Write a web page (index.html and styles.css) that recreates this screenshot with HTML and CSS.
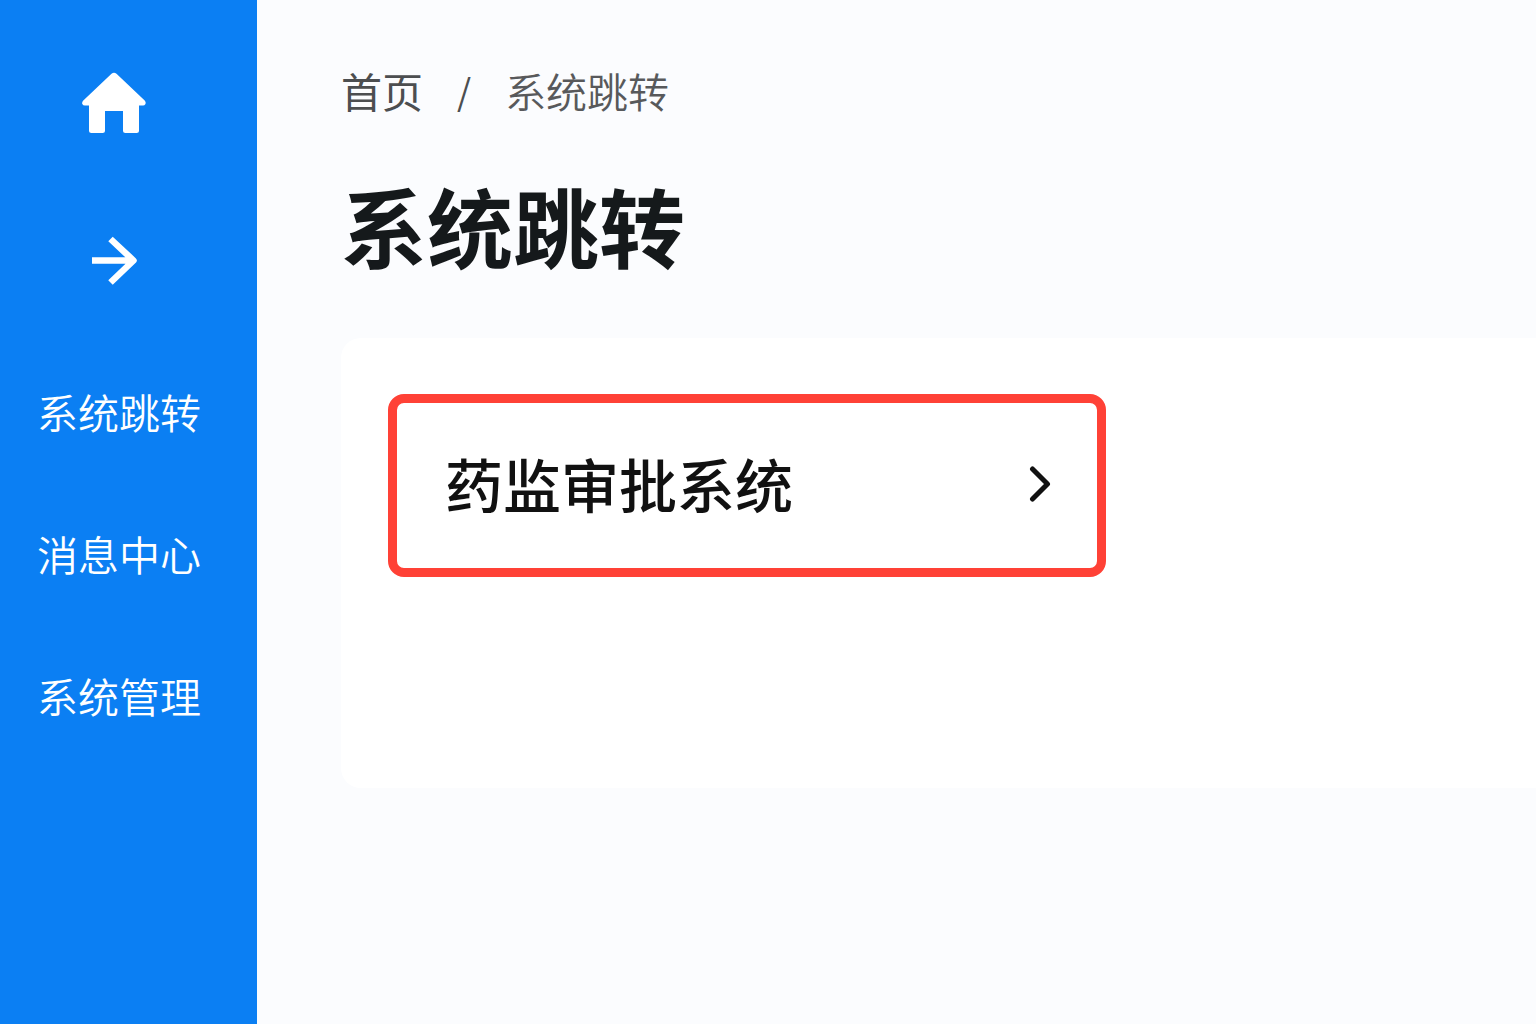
FILE: index.html
```
<!DOCTYPE html>
<html lang="zh-CN">
<head>
  <meta charset="UTF-8" />
  <meta name="viewport" content="width=device-width, initial-scale=1.0" />
  <title>系统跳转</title>
  <link rel="stylesheet" href="styles.css">
</head>
<body>
  <div class="layout">
    <nav class="sidebar">
      <a href="#" class="nav-icon" aria-label="首页">
        <svg width="64" height="64" viewBox="0 0 64 64" fill="#fff">
          <path d="M29.500 2.800Q32 .6 34.500 2.800L62.700 29.500Q64.300 31.300 63.300 33.300Q62.600 34.500 61 34.500H57V59.500Q57 62 54.500 62H43.500Q41 62 41 59.500V40H23V59.500Q23 62 20.500 62H9.500Q7 62 7 59.500V34.500H3Q1 34.500 .3 33Q-.3 31.300 1.300 29.500Z"/>
        </svg>
      </a>
      <a href="#" class="nav-icon" aria-label="跳转">
        <svg width="64" height="64" viewBox="0 0 64 64" fill="none" stroke="#fff" stroke-width="6.500" stroke-linejoin="round">
          <path d="M10 31.500H51M28.500 10L51.500 31.500L28.500 53.500"/>
        </svg>
      </a>
      <a href="#" class="nav-link">系统跳转</a>
      <a href="#" class="nav-link">消息中心</a>
      <a href="#" class="nav-link">系统管理</a>
    </nav>

    <main class="content">
      <div class="breadcrumb">
        <a href="#">首页</a>
        <span class="separator">/</span>
        <span class="crumb-current">系统跳转</span>
      </div>

      <h1>系统跳转</h1>

      <section class="card">
        <button type="button" class="system-item">
          <span>药监审批系统</span>
          <svg width="24" height="40" viewBox="0 0 24 40" fill="none" stroke="#111" stroke-width="5" stroke-linecap="round" stroke-linejoin="round">
            <path d="M3.500 5L18.500 20L3.500 35"/>
          </svg>
        </button>
      </section>
    </main>
  </div>
</body>
</html>
```
FILE: styles.css
```
* {
  box-sizing: border-box;
}

body {
  margin: 0;
  font-family: "Noto Sans CJK SC", sans-serif;
  background-color: #fbfcfe;
  color: #15191b;
}

a {
  color: inherit;
  text-decoration: none;
}

svg {
  display: block;
}

.layout {
  display: flex;
  min-height: 100vh;
}

.sidebar {
  display: flex;
  flex-direction: column;
  align-items: flex-start;
  flex: none;
  gap: 94px;
  width: 257px;
  padding: 71px 37px;
  background-color: #0b7ff3;
  color: #fff;
}

.nav-icon {
  padding-left: 45px;
}

.nav-link {
  font-size: 41px;
  font-weight: 350;
  line-height: 48px;
}

.content {
  flex: 1;
  padding: 62px 0 62px 84px;
}

.breadcrumb {
  display: flex;
  gap: 34px;
  font-size: 41px;
  line-height: 56px;
  color: #4c4e50;
}

.separator {
  font-size: 36px;
}

.crumb-current {
  font-weight: 350;
  color: #58595b;
}

h1 {
  margin: 54px 0 60px;
  font-size: 86px;
  font-weight: 700;
  line-height: 106px;
}

.card {
  min-height: 450px;
  padding: 56px 0 56px 47px;
  background-color: #fff;
  border-radius: 20px 0 0 20px;
}

.system-item {
  display: flex;
  align-items: center;
  justify-content: space-between;
  width: 62.5%;
  padding: 38px 44px 42px 48px;
  background-color: #fff;
  border: 9px solid #ff4136;
  border-radius: 16px;
  color: #111;
  font-family: inherit;
  font-size: 58px;
  font-weight: 500;
  line-height: 85px;
  cursor: pointer;
}
```
